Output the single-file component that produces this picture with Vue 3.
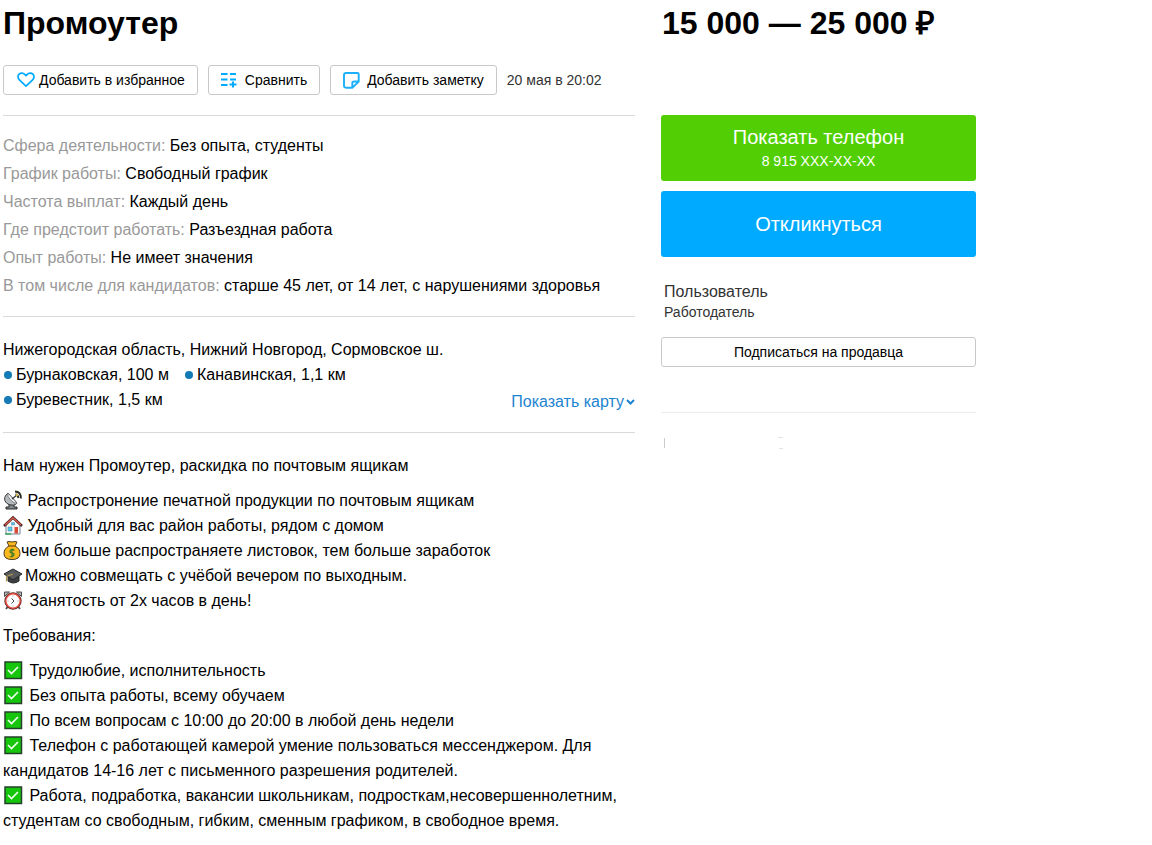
<script setup>
const details = [
  ['Сфера деятельности:', 'Без опыта, студенты'],
  ['График работы:', 'Свободный график'],
  ['Частота выплат:', 'Каждый день'],
  ['Где предстоит работать:', 'Разъездная работа'],
  ['Опыт работы:', 'Не имеет значения'],
  ['В том числе для кандидатов:', 'старше 45 лет, от 14 лет, с нарушениями здоровья'],
]
const stations = ['Бурнаковская, 100 м', 'Канавинская, 1,1 км', 'Буревестник, 1,5 км']
const requirements = [
  'Трудолюбие, исполнительность',
  'Без опыта работы, всему обучаем',
  'По всем вопросам с 10:00 до 20:00 в любой день недели',
  'Телефон с работающей камерой умение пользоваться мессенджером. Для кандидатов 14-16 лет с письменного разрешения родителей.',
  'Работа, подработка, вакансии школьникам, подросткам,несовершеннолетним, студентам со свободным, гибким, сменным графиком, в свободное время.',
]
</script>

<template>
  <div class="page">
    <main class="main">
      <h1 class="title">Промоутер</h1>
      <div class="actions">
        <button type="button" class="btn fav">
          <svg width="18" height="16" viewBox="0 0 18 16" fill="none" stroke="#0af" stroke-width="1.7" stroke-linejoin="round">
            <path d="M9 14.2 2.4 7.8C.6 6 .6 3.600 2.100 2.200 3.700.700 6.300.800 7.700 2.300L9 3.700l1.300-1.400c1.400-1.500 4-1.600 5.600-.1 1.500 1.400 1.500 3.800-.3 5.600z" />
          </svg>
          Добавить в избранное
        </button>
        <button type="button" class="btn compare">
          <svg width="16" height="16" viewBox="0 0 16 16" fill="none" stroke="#0af" stroke-width="2">
            <path d="M0 2h6.500M9 2h6M0 7.500h6.500M9 7.500h6M0 13h6.500M8.500 12.500h7M12 9.500v6" />
          </svg>
          Сравнить
        </button>
        <button type="button" class="btn note">
          <svg width="17" height="17" viewBox="0 0 17 17" fill="none" stroke="#1ab0fb" stroke-width="1.9" stroke-linejoin="round">
            <path d="M3 1h11.500q1.200 0 1.200 1.200V9.500L9.500 15.700H3Q1 15.700 1 13.700V3Q1 1 3 1zM9.300 15.500v-4.200q0-1.800 1.800-1.800h4.400" />
          </svg>
          Добавить заметку
        </button>
        <span class="date">20 мая в 20:02</span>
      </div>

      <section class="section details">
        <div v-for="[label, value] in details" :key="label">
          <span class="label">{{ label }}</span> {{ value }}
        </div>
      </section>

      <section class="section location">
        <div>
          <div>Нижегородская область, Нижний Новгород, Сормовское ш.</div>
          <ul class="stations">
            <li v-for="s in stations" :key="s"><i class="dot"></i>{{ s }}</li>
          </ul>
        </div>
        <a href="#" class="map">Показать карту<svg width="9" height="6" viewBox="0 0 9 6" fill="none" stroke="#1d84d0" stroke-width="2"><path d="M1 1l3.500 3.500L8 1" /></svg></a>
      </section>

      <section class="section about">
        <p>Нам нужен Промоутер, раскидка по почтовым ящикам</p>
        <ul>
          <li>
            <svg class="emoji small" viewBox="0 0 20 20">
              <path d="M6 13h5v4h3v2H3v-2h3z" fill="#82898d" stroke="#292929" />
              <path d="M5 3C0 7 1 12 5 14c4 2 8 1 9-1z" fill="#b4bbbf" stroke="#333" />
              <path d="M5 3 14 13Q11.500 14 7.500 10T5 3z" fill="#f0f2f3" stroke="#666" stroke-width=".8" />
              <path d="M9 9l5-4" stroke="#333" stroke-width="1.200" />
              <path d="M12 1.500q6 0 6 7M12.500 4.500q2.500 0 3 3.500" fill="none" stroke="#2b2b20" stroke-width="1.800" />
              <circle cx="14" cy="5" r="1.200" fill="#d6b94c" />
            </svg>
            Распростронение печатной продукции по почтовым ящикам
          </li>
          <li>
            <svg class="emoji small" viewBox="0 0 20 20">
              <path d="M3 9.500V19h14V9.500L10 3z" fill="#f6f8f8" stroke="#789" />
              <path d="M1 11 10 2.500l9 8.500" fill="none" stroke="#47211e" stroke-width="2.600" />
              <path d="M2 10 10 2.800l8 7.200" fill="none" stroke="#e65b4c" stroke-width="1.200" />
              <path d="M11.500 12h3.500v6.500h-3.500z" fill="#d84c38" />
              <path d="M5 12h4v4H5zM8.500 7.500h3v2.500h-3z" fill="#54cbed" stroke="#579" stroke-width=".5" />
              <path d="M2 19h6" stroke="#39a65b" stroke-width="1.500" />
            </svg>
            Удобный для вас район работы, рядом с домом
          </li>
          <li>
            <svg class="emoji bag" viewBox="0 0 18 20">
              <path d="M4 2l2-.5 3 .5 3-.5 2 .5-2 4q5 2.500 5 7.500Q17 19.500 9 19.500T1 13.500Q1 8.500 6 6z" fill="#fbb91d" stroke="#493b20" />
              <path d="M5 6h8" stroke="#8e5c14" stroke-width="1.500" />
              <path d="M11.500 10.500Q9 8.500 7.500 10.500T9 13t1.500 2.500-4 1M9 8.500v9" fill="none" stroke="#477e27" stroke-width="1.300" />
            </svg>чем больше распространяете листовок, тем больше заработок
          </li>
          <li>
            <svg class="emoji wide" viewBox="0 0 22 20">
              <path d="M5 9v7q5 4 11 0V9z" fill="#3d4042" stroke="#222" />
              <path d="M1 9 10 4l9 5-9 6z" fill="#575b5d" stroke="#242424" />
              <path d="M10 9 3.500 11.500v5" fill="none" stroke="#b29952" stroke-width="1.200" />
            </svg>Можно совмещать с учёбой вечером по выходным.
          </li>
          <li>
            <svg class="emoji wide" viewBox="0 0 22 20">
              <path d="M4.500 17 3 19M15.500 17l1.500 2" stroke="#555" stroke-width="2" />
              <path d="M1.500 6.500V2h5zM18.500 6.500V2h-5z" fill="#b7b7b7" stroke="#4a4a4a" />
              <circle cx="10" cy="11" r="7.500" fill="#fff" stroke="#54211d" stroke-width="2.300" />
              <circle cx="10" cy="11" r="7.200" fill="#fff" stroke="#e75042" stroke-width="1.400" />
              <path d="M8.500 8.500 11 11l-2.500 2.500" fill="none" stroke="#444" />
              <path d="M10 5.500v1M15.500 11h-1M10 16.500v-1M4.500 11h1" stroke="#999" />
            </svg>
            Занятость от 2х часов в день!
          </li>
        </ul>
        <p>Требования:</p>
        <ul>
          <li v-for="r in requirements" :key="r">
            <svg class="emoji wide" viewBox="0 0 22 20">
              <path d="M2 2h16.500v16.500H2z" fill="#16c60c" stroke="#25402a" stroke-width="1.500" />
              <path d="M5 10l3.500 3.500L15 7" fill="none" stroke="#f2fff1" stroke-width="1.600" />
            </svg>
            {{ r }}
          </li>
        </ul>
      </section>
    </main>

    <aside class="side">
      <h2 class="title price">15 000 — 25 000 ₽</h2>
      <button type="button" class="cta phone">Показать телефон<small>8 915 XXX-XX-XX</small></button>
      <button type="button" class="cta reply">Откликнуться</button>
      <div class="seller">
        <div>Пользователь</div>
        <div class="role">Работодатель</div>
      </div>
      <button type="button" class="btn subscribe">Подписаться на продавца</button>
      <div class="rest">
        <svg width="160" height="20" viewBox="0 0 160 20" fill="none" stroke="#ccc">
          <path d="M.500 1v10" />
          <path d="M114 .500h5M115 11.500h4" stroke="#e4e4e4" />
        </svg>
      </div>
    </aside>
  </div>
</template>

<style>
body { background: #fff; }
</style>

<style scoped>
.page {
  display: grid;
  grid-template-columns: minmax(0, 1fr) 315px;
  column-gap: 26px;
  max-width: 973px;
  margin-left: 3px;
  font: 16px/25px "Liberation Sans", Arial, sans-serif;
  color: #000;
}
.title { margin: 0; font-size: 32px; line-height: 46px; font-weight: 700; }
button { font-family: inherit; cursor: pointer; }
ul { list-style: none; margin: 0; padding: 0; }
.actions { display: flex; flex-wrap: wrap; align-items: center; gap: 10px; margin: 19px 0 20px; }
.btn {
  display: flex;
  align-items: center;
  justify-content: center;
  box-sizing: border-box;
  height: 30px;
  padding: 0 12px;
  border: 1px solid #c9c9c9;
  border-radius: 3px;
  background: #fff;
  color: #000;
  font-size: 14px;
  white-space: nowrap;
}
.fav { gap: 4px; padding-left: 13px; }
.compare { gap: 8px; }
.note { gap: 7px; }
.date { font-size: 14px; color: #333; }
.section { border-top: 1px solid #d9d9d9; }
.details { padding: 16px 0; line-height: 28px; }
.label { color: #999; }
.location { display: flex; justify-content: space-between; align-items: flex-end; padding: 20px 0; }
.stations { display: flex; flex-wrap: wrap; column-gap: 15px; max-width: 380px; }
.stations li { display: flex; align-items: center; }
.dot { width: 8px; height: 8px; margin: 0 4px 0 1px; border-radius: 50%; background: #127ab5; }
.map { display: flex; align-items: center; gap: 2px; line-height: 21px; color: #1d84d0; text-decoration: none; white-space: nowrap; }
.about { padding-top: 20px; }
.about p { margin: 0; }
.about ul { margin: 10px 0; }
.emoji { height: 20px; vertical-align: middle; margin: -4px 0 0; }
.small { width: 20px; }
.bag { width: 18px; }
.wide { width: 22px; }
.price { padding-left: 1px; white-space: nowrap; }
.cta {
  display: flex;
  flex-direction: column;
  align-items: center;
  justify-content: center;
  width: 100%;
  height: 66px;
  padding: 0;
  border: 0;
  border-radius: 3px;
  color: #fff;
  font-size: 20px;
  line-height: 26px;
}
.cta small { font-size: 14px; line-height: 22px; }
.phone { margin: 69px 0 10px; background: #51cf04; }
.reply { background: #0af; }
.seller { margin: 24px 0 14px 3px; line-height: 21px; color: #333; }
.role { font-size: 14px; }
.subscribe { width: 100%; }
.rest { margin-top: 45px; padding: 24px 0 0 3px; border-top: 1px solid #ececec; }
.rest svg { display: block; }
</style>
